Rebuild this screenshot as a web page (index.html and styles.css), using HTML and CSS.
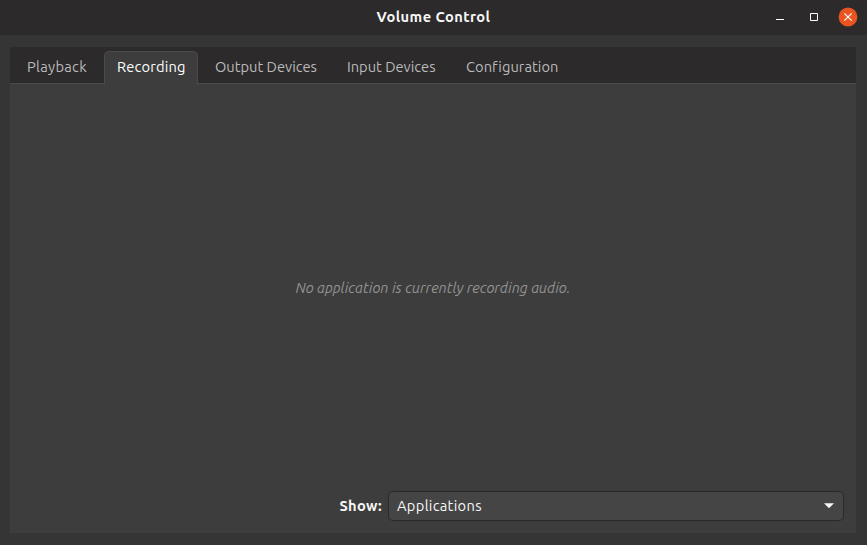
FILE: index.html
```html
<!DOCTYPE html>
<html lang="en">
<head>
<meta charset="utf-8">
<title>Volume Control</title>
<link rel="stylesheet" href="styles.css">
</head>
<body>
<div class="window">
  <header class="titlebar">
    <h1 class="title">Volume Control</h1>
    <div class="controls">
      <svg class="control" width="20" height="20" viewBox="0 0 20 20"><path d="M6 12.5h8" stroke="#fff"/></svg>
      <svg class="control" width="20" height="20" viewBox="0 0 20 20"><path d="M6.5 6.5h7v7h-7z" fill="none" stroke="#fff"/></svg>
      <svg class="control" width="20" height="20" viewBox="0 0 20 20"><circle cx="10" cy="10" r="9.4" fill="#e95420"/><path d="M6.3 6.3l7.4 7.4M13.7 6.3l-7.4 7.4" stroke="#fff" stroke-width="1.2"/></svg>
    </div>
  </header>
  <main class="notebook">
    <nav class="tabs">
      <div class="tab"><span class="t-playback">Playback</span></div>
      <div class="tab active"><span class="t-recording">Recording</span></div>
      <div class="tab"><span class="t-output">Output Devices</span></div>
      <div class="tab"><span class="t-input">Input Devices</span></div>
      <div class="tab"><span class="t-config">Configuration</span></div>
    </nav>
    <section class="page">
      <p class="empty">No application is currently recording audio.</p>
      <div class="filter">
        <span class="label">Show:</span>
        <div class="select"><span class="value">Applications</span><svg width="10" height="6" viewBox="0 0 10 6"><path d="M0 0.3h10L5 5.3z" fill="#f7f7f7"/></svg></div>
      </div>
    </section>
  </main>
</div>
</body>
</html>
```
FILE: styles.css
```css
* { box-sizing: border-box; }
body { margin: 0; background: #353535; font: 14.667px/20px Ubuntu, "Noto Sans", sans-serif; color: #f7f7f7; }
.window { width: 867px; height: 545px; display: flex; flex-direction: column; background: #353535; overflow: hidden; }
.titlebar { height: 35px; flex: none; background: #2c2a2b; display: grid; grid-template-columns: 1fr auto 1fr; align-items: center; }
.title { grid-column: 2; margin: 0 0 2px; font-size: 14.667px; line-height: 20px; font-weight: 700; letter-spacing: 0.42px; }
.controls { display: flex; justify-content: flex-end; gap: 14px; height: 20px; margin-bottom: 1px; padding-right: 9px; }
.control { display: block; }
.notebook { width: 846px; height: 486px; margin: 12px 0 0 10px; display: flex; flex-direction: column; background: #3d3d3d; }
.tabs { height: 37px; flex: none; display: grid; grid-template-columns: 86px 94px 128px 115px 118px; column-gap: 4px; padding: 4px 4px 0; background: #2c2a2b; box-shadow: inset 0 -1px #4b4b4b; }
.tab { height: 33px; padding: 5px 12px 0; border: 1px solid transparent; border-bottom: 0; border-radius: 5px 5px 0 0; color: #bababa; white-space: nowrap; }
.tab.active { background: #3d3d3d; border-color: #4b4b4b; color: #fff; }
.t-playback { letter-spacing: 0.3px; }
.t-recording { letter-spacing: 0.18px; }
.t-config { letter-spacing: 0.06px; }
.page { flex: 1; display: flex; flex-direction: column; padding: 0 12px 12px; }
.empty { flex: 1; margin: 0; display: flex; align-items: center; justify-content: center; font-style: italic; color: #929292; }
.filter { display: flex; justify-content: flex-end; align-items: center; gap: 6px; }
.label { font-weight: 700; letter-spacing: 0.35px; }
.value { letter-spacing: 0.32px; }
.select { width: 456px; height: 30px; display: flex; align-items: center; justify-content: space-between; padding: 0 9px 0 8px; border: 1px solid #292929; border-radius: 5px; background: #454545; }
```
